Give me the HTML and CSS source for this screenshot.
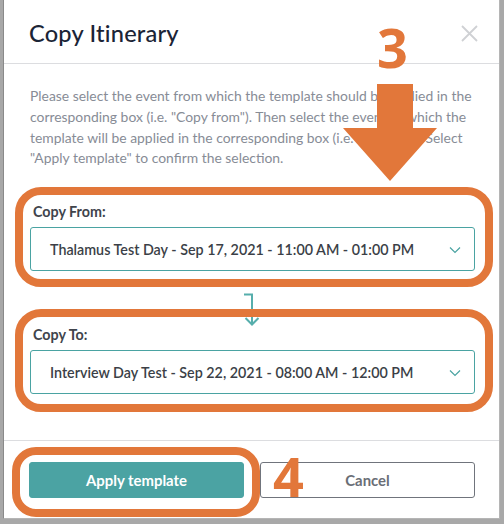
FILE: index.html
```html
<!DOCTYPE html>
<html lang="en">
<head>
    <meta charset="UTF-8">
    <meta name="viewport" content="width=device-width, initial-scale=1.0">
    <title>Copy Itinerary</title>
    <link rel="stylesheet" href="styles.css">
</head>
<body>
    <div class="modal">
        <div class="modal-header">
            <h2 class="modal-title">Copy Itinerary</h2>
            <button class="close" type="button" aria-label="Close">
                <svg width="17" height="17" viewBox="0 0 17 17"><path d="M1 1L16 16M16 1L1 16" stroke="#cfd1d4" stroke-width="1.8" fill="none"/></svg>
            </button>
        </div>
        <div class="modal-body">
            <p class="intro">Please select the event from which the template should be applied in the corresponding box (i.e. "Copy from"). Then select the event to which the template will be applied in the corresponding box (i.e. "Copy to"). Select "Apply template" to confirm the selection.</p>

            <div class="field">
                <label class="field-label">Copy From:</label>
                <div class="select">
                    <span>Thalamus Test Day - Sep 17, 2021 - 11:00 AM - 01:00 PM</span>
                    <svg class="chev" width="12" height="8" viewBox="0 0 12 8"><path d="M1 1.5L6 6.5L11 1.5" stroke="#4aa3a2" stroke-width="1.2" fill="none"/></svg>
                </div>
            </div>

            <div class="connector">
                <svg width="24" height="34" viewBox="0 0 24 34"><path d="M5 1.5H13V31M6.5 25L13 31.5L19.5 25" stroke="#56aeac" stroke-width="2" fill="none"/></svg>
            </div>

            <div class="field">
                <label class="field-label">Copy To:</label>
                <div class="select">
                    <span>Interview Day Test - Sep 22, 2021 - 08:00 AM - 12:00 PM</span>
                    <svg class="chev" width="12" height="8" viewBox="0 0 12 8"><path d="M1 1.5L6 6.5L11 1.5" stroke="#4aa3a2" stroke-width="1.2" fill="none"/></svg>
                </div>
            </div>
        </div>
        <div class="modal-footer">
            <button class="btn btn-primary" type="button">Apply template</button>
            <button class="btn btn-outline" type="button">Cancel</button>
        </div>
    </div>

    <!-- tutorial markup drawn over the dialog -->
    <svg class="marks" width="504" height="524" viewBox="0 0 504 524">
        <rect x="19" y="191" width="470" height="92" rx="22" fill="none" stroke="#e2773a" stroke-width="8"/>
        <rect x="19" y="313" width="470" height="95" rx="22" fill="none" stroke="#e2773a" stroke-width="8"/>
        <rect x="16" y="451" width="240" height="62" rx="20" fill="none" stroke="#e2773a" stroke-width="8"/>
        <path d="M377 84H413V128H437L390 181L343 128H377Z" fill="#e2773a"/>
    </svg>
    <span class="step step-3">3</span>
    <span class="step step-4">4</span>
</body>
</html>
```

FILE: styles.css
```css
body {
    margin: 0;
    background-color: #a8a8a8;
    font-family: Lato, "Open Sans", Arial, sans-serif;
    width: 504px;
    height: 524px;
    overflow: hidden;
    position: relative;
}
.modal {
    margin-left: 3px;
    width: 497px;
    height: 519px;
    background: #fff;
    border-left: 1px solid #8a8a8a;
    border-right: 1px solid #b5b5b5;
    border-bottom: 1px solid #b5b5b5;
    box-sizing: border-box;
    display: flex;
    flex-direction: column;
}
.modal-header {
    height: 64px;
    border-bottom: 1px solid #dcdde0;
    box-sizing: border-box;
    display: flex;
    align-items: center;
    justify-content: space-between;
    padding: 2px 21px 0 25px;
}
.modal-title {
    margin: 0;
    font-size: 23.6px;
    font-weight: 500;
    color: #1b2436;
    letter-spacing: 0.2px;
}
.close {
    background: none;
    border: none;
    padding: 0;
    width: 17px;
    height: 17px;
    margin-top: 2px;
}
.close svg {
    display: block;
}
.modal-body {
    padding: 22px 24px 0 26px;
    flex: 1;
    border-bottom: 1px solid #dcdde0;
}
.intro {
    margin: 0 0 35px;
    font-size: 13.9px;
    line-height: 20.8px;
    color: #878c96;
}
.field-label {
    display: block;
    font-size: 14.3px;
    line-height: 16px;
    font-weight: 700;
    color: #40444c;
    padding-left: 3px;
    margin-bottom: 7px;
}
.select {
    height: 44px;
    border: 1px solid #4aa3a2;
    border-radius: 3px;
    box-sizing: border-box;
    display: flex;
    align-items: center;
    justify-content: space-between;
    padding: 0 13px 0 19px;
    font-size: 14.3px;
    font-weight: 600;
    color: #3b3f47;
}
.chev {
    display: block;
    margin-top: 2px;
}
.connector {
    height: 56px;
    display: flex;
    justify-content: center;
    align-items: flex-start;
    padding-top: 22px;
    box-sizing: border-box;
    padding-right: 4px;
}
.connector svg {
    display: block;
}
.modal-footer {
    height: 77px;
    display: flex;
    gap: 16px;
    padding: 21px 24px 0 25px;
    box-sizing: border-box;
}
.btn {
    width: 216px;
    height: 36px;
    border-radius: 3px;
    font-family: Lato, "Open Sans", Arial, sans-serif;
    font-size: 14.9px;
    font-weight: 700;
    cursor: pointer;
}
.btn-primary {
    background-color: #4ba3a3;
    color: #fff;
    border: 1px solid #4ba3a3;
}
.btn-outline {
    background-color: #fff;
    color: #6a6e76;
    border: 1px solid #70747c;
}
.marks {
    position: absolute;
    top: 0;
    left: 0;
    pointer-events: none;
}
.step {
    position: absolute;
    font-family: "Open Sans", Arial, sans-serif;
    font-weight: 700;
    font-size: 54px;
    line-height: 54px;
    color: #e2773a;
}
.step-3 {
    left: 377px;
    top: 20px;
}
.step-4 {
    left: 273px;
    top: 449px;
}
```
